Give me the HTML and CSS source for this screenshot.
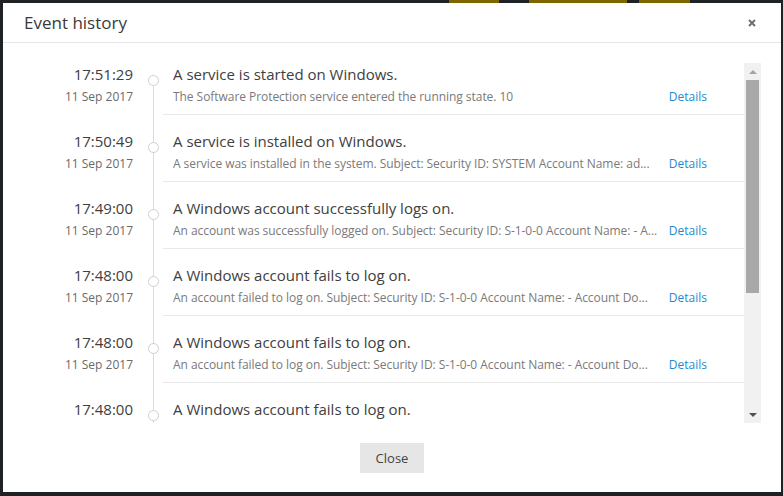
FILE: index.html
```html
<!DOCTYPE html>
<html lang="en">
<head>
  <meta charset="UTF-8">
  <meta name="viewport" content="width=device-width, initial-scale=1.0">
  <title>Event history</title>
  <link rel="stylesheet" href="styles.css">
</head>
<body>
  <!-- page behind the dialog, only its top edge shows -->
  <div class="backdrop">
    <span class="tab tab-a"></span>
    <span class="tab tab-b"></span>
    <span class="tab tab-c"></span>
  </div>

  <div class="dialog">
    <div class="dialog-header">
      <h2>Event history</h2>
      <button class="close-x" aria-label="Close">
        <svg width="8" height="8" viewBox="0 0 8 8"><path d="M1 1 L7 7 M7 1 L1 7" stroke="#6f6f6f" stroke-width="2"/></svg>
      </button>
    </div>

    <div class="dialog-body">
      <div class="viewport">
        <div class="list">
          <div class="event first">
            <div class="when"><div class="time">17:51:29</div><div class="date">11 Sep 2017</div></div>
            <div class="mark"><span class="dot"></span></div>
            <div class="info">
              <div class="title">A service is started on Windows.</div>
              <div class="line"><span class="desc">The Software Protection service entered the running state. 10</span><a class="details" href="#">Details</a></div>
            </div>
          </div>
          <div class="event">
            <div class="when"><div class="time">17:50:49</div><div class="date">11 Sep 2017</div></div>
            <div class="mark"><span class="dot"></span></div>
            <div class="info">
              <div class="title">A service is installed on Windows.</div>
              <div class="line"><span class="desc">A service was installed in the system. Subject: Security ID: SYSTEM Account Name: ad...</span><a class="details" href="#">Details</a></div>
            </div>
          </div>
          <div class="event">
            <div class="when"><div class="time">17:49:00</div><div class="date">11 Sep 2017</div></div>
            <div class="mark"><span class="dot"></span></div>
            <div class="info">
              <div class="title">A Windows account successfully logs on.</div>
              <div class="line"><span class="desc">An account was successfully logged on. Subject: Security ID: S-1-0-0 Account Name: - A...</span><a class="details" href="#">Details</a></div>
            </div>
          </div>
          <div class="event">
            <div class="when"><div class="time">17:48:00</div><div class="date">11 Sep 2017</div></div>
            <div class="mark"><span class="dot"></span></div>
            <div class="info">
              <div class="title">A Windows account fails to log on.</div>
              <div class="line"><span class="desc">An account failed to log on. Subject: Security ID: S-1-0-0 Account Name: - Account Do...</span><a class="details" href="#">Details</a></div>
            </div>
          </div>
          <div class="event">
            <div class="when"><div class="time">17:48:00</div><div class="date">11 Sep 2017</div></div>
            <div class="mark"><span class="dot"></span></div>
            <div class="info">
              <div class="title">A Windows account fails to log on.</div>
              <div class="line"><span class="desc">An account failed to log on. Subject: Security ID: S-1-0-0 Account Name: - Account Do...</span><a class="details" href="#">Details</a></div>
            </div>
          </div>
          <div class="event">
            <div class="when"><div class="time">17:48:00</div><div class="date">11 Sep 2017</div></div>
            <div class="mark"><span class="dot"></span></div>
            <div class="info">
              <div class="title">A Windows account fails to log on.</div>
              <div class="line"><span class="desc">An account failed to log on. Subject: Security ID: S-1-0-0 Account Name: - Account Do...</span><a class="details" href="#">Details</a></div>
            </div>
          </div>
        </div>

        <div class="scrollbar">
          <div class="arrow up"></div>
          <div class="track"><div class="thumb"></div></div>
          <div class="arrow down"></div>
        </div>
      </div>
    </div>

    <div class="dialog-footer">
      <button class="btn">Close</button>
    </div>
  </div>
</body>
</html>
```

FILE: styles.css
```css
* {
  box-sizing: border-box;
}
html, body {
  margin: 0;
  height: 100%;
}
body {
  background-color: #1e2225;
  font-family: "Open Sans", "Liberation Sans", sans-serif;
  color: #333;
  overflow: hidden;
}
.backdrop {
  display: flex;
  height: 3px;
}
.tab {
  display: block;
  height: 3px;
  background-color: #7d6600;
}
.tab-a {
  margin-left: 449px;
  width: 50px;
}
.tab-b {
  margin-left: 30px;
  width: 98px;
}
.tab-c {
  margin-left: 12px;
  width: 51px;
}

.dialog {
  margin-left: 3px;
  width: 778px;
  background-color: #fff;
}
.dialog-header {
  display: flex;
  align-items: center;
  justify-content: space-between;
  height: 40px;
  padding: 0 25px 0 21px;
  border-bottom: 1px solid #e5e5e5;
}
.dialog-header h2 {
  margin: 0;
  font-size: 17px;
  font-weight: normal;
  line-height: 39px;
  color: #3a3a3a;
}
.close-x {
  display: flex;
  padding: 0;
  border: none;
  background: none;
  cursor: pointer;
}

.dialog-body {
  padding: 20px 20px 0 20px;
}
.viewport {
  display: flex;
  height: 360px;
}
.list {
  flex: 1;
  overflow: hidden;
}
.event {
  display: flex;
  height: 67px;
  flex-shrink: 0;
}
.when {
  width: 110px;
  padding-top: 16px;
  text-align: right;
}
.time {
  font-size: 15px;
  line-height: 20px;
  color: #404040;
}
.date {
  margin-top: 4px;
  font-size: 12px;
  line-height: 18px;
  color: #6a6a6a;
}
.mark {
  width: 20px;
  margin-left: 10px;
  background: linear-gradient(#dcdcdc, #dcdcdc) 10px 0 / 1px 100% no-repeat;
}
.dot {
  display: block;
  width: 11px;
  height: 11px;
  margin: 27px 0 0 5px;
  border: 1px solid #cfcfcf;
  border-radius: 50%;
  background-color: #fff;
}
.info {
  flex: 1;
  min-width: 0;
  padding: 16px 37px 0 10px;
  border-bottom: 1px solid #e9e9e9;
}
.title {
  font-size: 15px;
  line-height: 20px;
  color: #404040;
}
.line {
  display: flex;
  margin-top: 4px;
  font-size: 12px;
  line-height: 18px;
}
.desc {
  flex: 1;
  min-width: 0;
  white-space: nowrap;
  overflow: hidden;
  text-overflow: ellipsis;
  letter-spacing: -0.05px;
  color: #7a7a7a;
}
.details {
  margin-left: 8px;
  color: #1e8bd0;
  text-decoration: none;
}

/* first row starts scrolled up a bit */
.first {
  height: 52px;
}
.first .when,
.first .info {
  padding-top: 1px;
}
.first .dot {
  margin-top: 12px;
}
.first.event .mark {
  background-position: 10px 17px;
}

.scrollbar {
  display: flex;
  flex-direction: column;
  width: 17px;
  background-color: #f1f1f1;
}
.arrow {
  display: flex;
  justify-content: center;
  align-items: center;
  height: 17px;
}
.arrow::after {
  content: "";
  border-left: 4px solid transparent;
  border-right: 4px solid transparent;
}
.up::after {
  border-bottom: 4px solid #a3a3a3;
}
.down::after {
  border-top: 4px solid #505050;
}
.track {
  flex: 1;
  padding: 0 2px;
}
.thumb {
  height: 213px;
  background-color: #a8a8a8;
}

.dialog-footer {
  display: flex;
  justify-content: center;
  padding: 20px 0 19px;
}
.btn {
  width: 64px;
  height: 30px;
  border: none;
  background-color: #e6e6e6;
  font-family: "Open Sans", "Liberation Sans", sans-serif;
  font-size: 13px;
  color: #444;
  cursor: pointer;
}
```
